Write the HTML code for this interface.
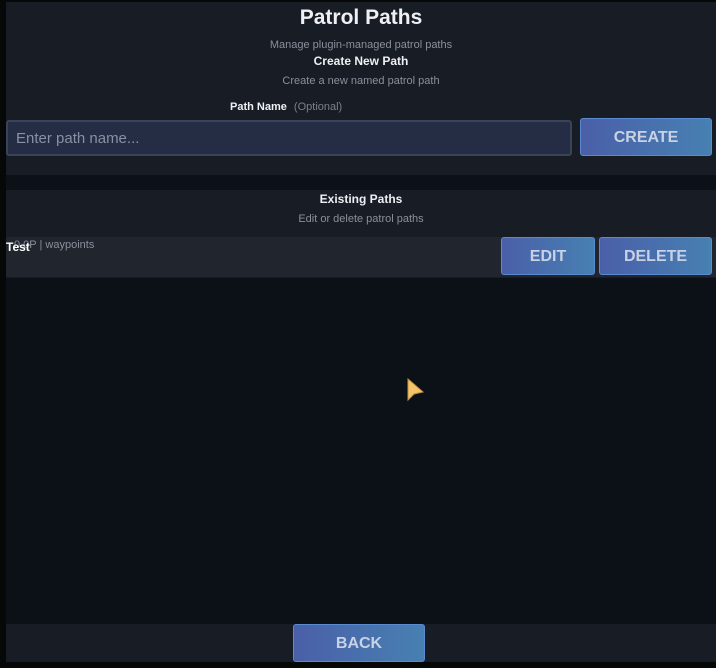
<!DOCTYPE html>
<html><head><meta charset="utf-8"><style>
*{margin:0;padding:0;box-sizing:border-box}
body{width:716px;height:668px;background:#050806;position:relative;overflow:hidden;font-family:"Liberation Sans",sans-serif}
.main{position:absolute;left:6px;top:2px;width:710px;height:660px;background:#0c1017}
.p1{position:absolute;left:0;top:0;width:710px;height:173px;background:#181c24}
.p2{position:absolute;left:0;top:188px;width:710px;height:88px;background:#181c24}
.row{position:absolute;left:0;top:235px;width:710px;height:40px;background:#20252e}
.foot{position:absolute;left:0;top:622px;width:710px;height:38px;background:#181c24}
.c{position:absolute;left:0;width:710px;text-align:center;color:#eef0f4}
.btn{position:absolute;background:linear-gradient(90deg,#4a5fa8,#4780b2);border:1.5px solid #5a8ad0;border-radius:3px;color:#c8d2e4;font-weight:bold;font-size:16px;text-align:center}
</style></head><body>
<div class="main">
<div class="p1"></div><div class="p2"></div><div class="row"></div><div class="foot"></div>
<div class="c" style="top:4px;font-size:21px;font-weight:bold">Patrol Paths</div>
<div class="c" style="top:37px;font-size:11px;color:#8a909c">Manage plugin-managed patrol paths</div>
<div class="c" style="top:52px;font-size:12px;font-weight:bold">Create New Path</div>
<div class="c" style="top:73px;font-size:11px;color:#8a909c">Create a new named patrol path</div>
<div style="position:absolute;left:224px;top:99px;font-size:11px;color:#eef0f4;font-weight:bold">Path Name <span style="font-weight:normal;color:#7a808c;margin-left:4px">(Optional)</span></div>
<div style="position:absolute;left:0;top:118px;width:566px;height:36px;background:#252d45;border:2px solid #3a4458;border-radius:3px;color:#8890a4;font-size:15px;padding:8px 8px">Enter path name...</div>
<div class="btn" style="left:574px;top:116px;width:132px;height:38px;line-height:38px">CREATE</div>
<div class="c" style="top:190px;font-size:12px;font-weight:bold">Existing Paths</div>
<div class="c" style="top:211px;font-size:11px;color:#8a909c">Edit or delete patrol paths</div>
<div style="position:absolute;left:8px;top:237px;font-size:11px;color:#8a909c">0.0P | waypoints</div>
<div style="position:absolute;left:0;top:238px;font-size:12px;font-weight:bold;color:#fff">Test</div>
<div class="btn" style="left:495px;top:235px;width:94px;height:38px;line-height:38px">EDIT</div>
<div class="btn" style="left:593px;top:235px;width:113px;height:38px;line-height:38px">DELETE</div>
<div class="btn" style="left:287px;top:622px;width:132px;height:38px;line-height:38px">BACK</div>
</div>
<svg style="position:absolute;left:406px;top:378px" width="20" height="26" viewBox="0 0 20 26"><path d="M2 1 L2 22 L8 16 L17 14 Z" fill="#f2c56a" stroke="#c89040" stroke-width="1"/></svg>
</body></html>
